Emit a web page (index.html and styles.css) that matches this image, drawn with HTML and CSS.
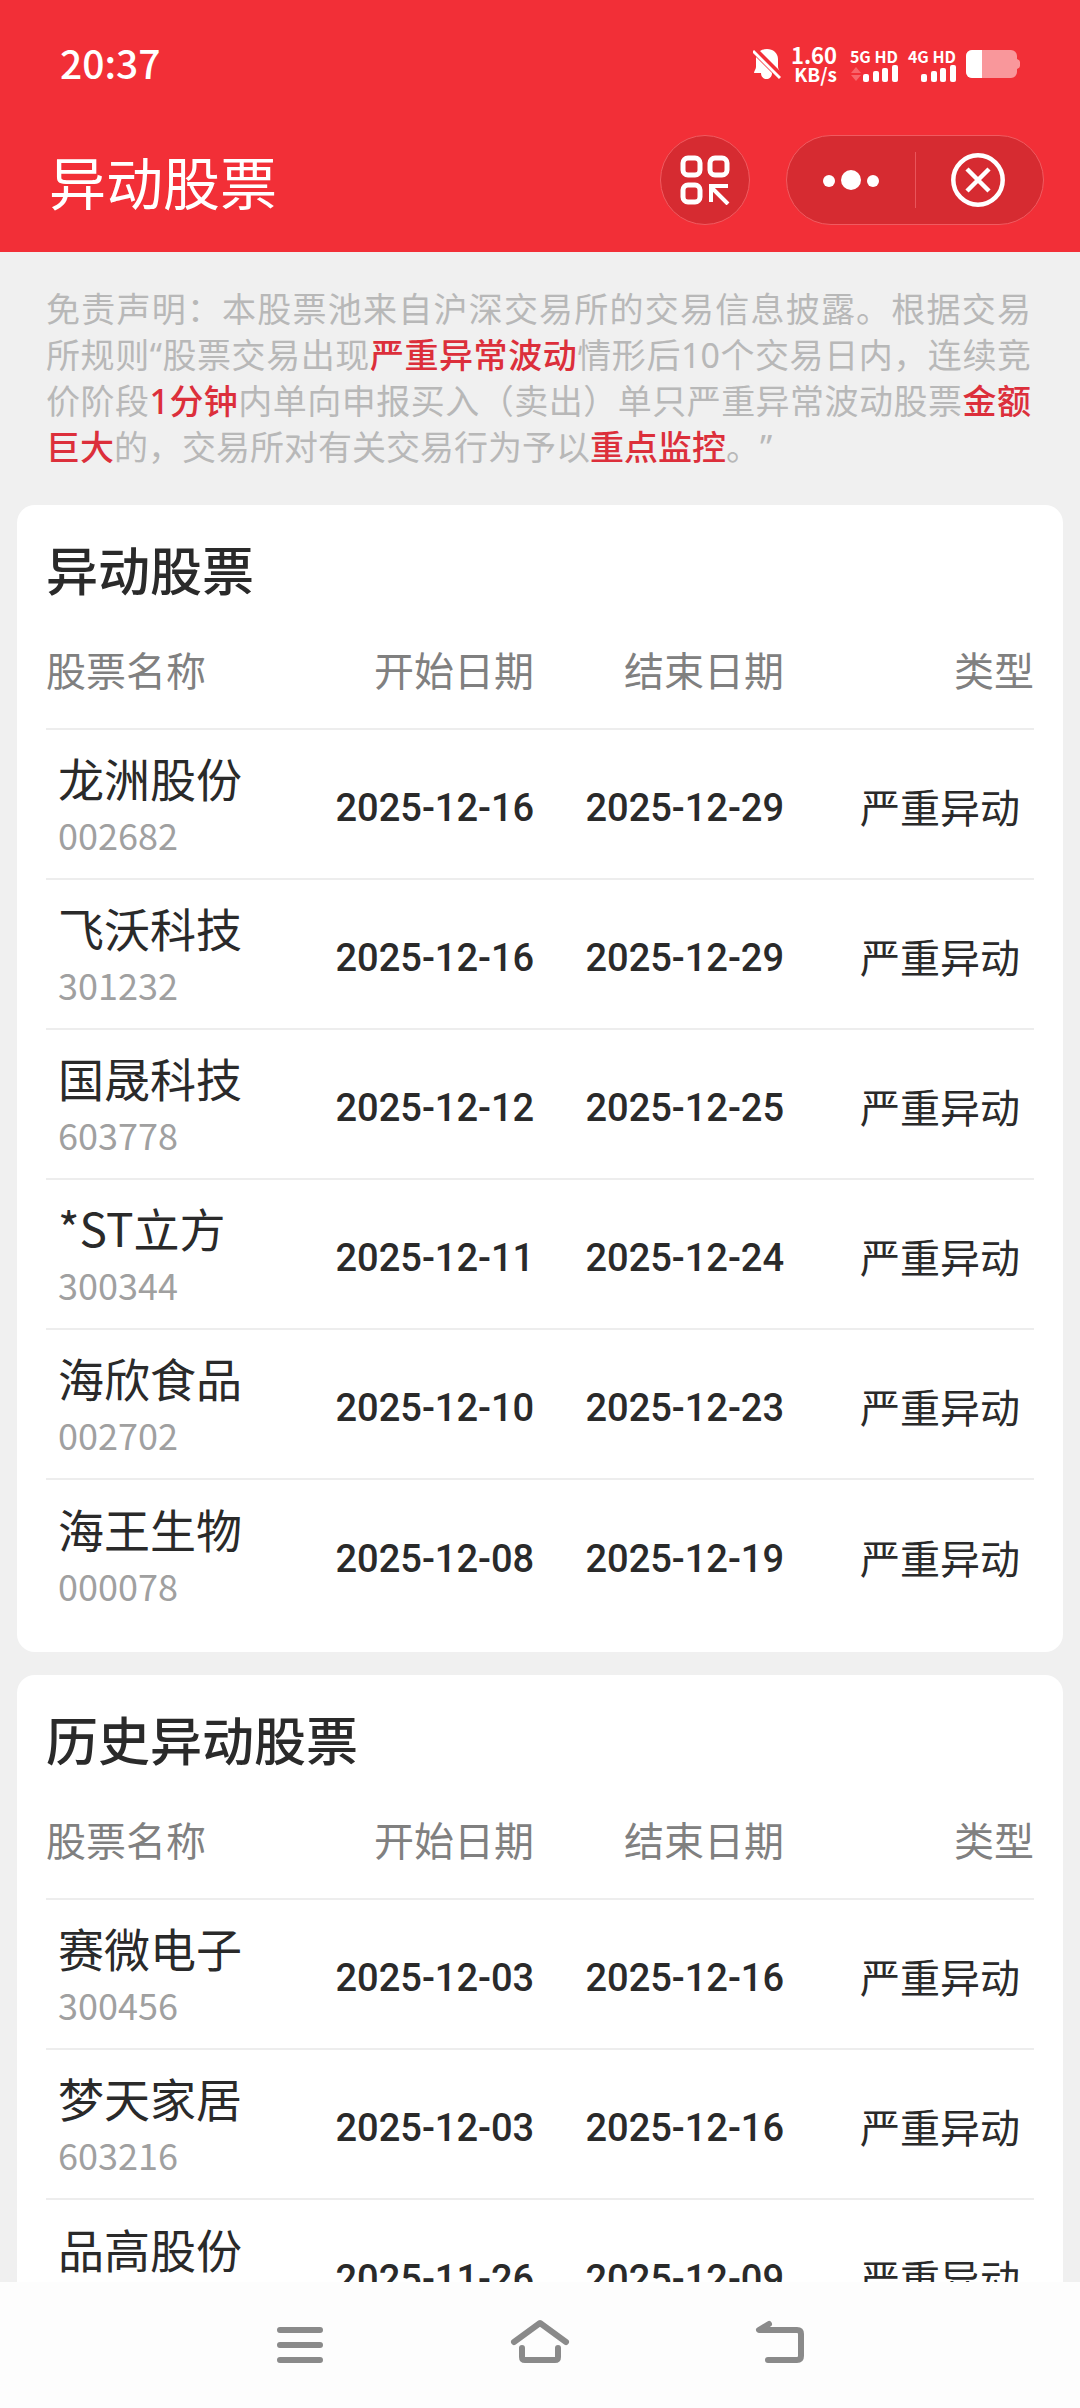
FILE: index.html
```html
<!DOCTYPE html>
<html lang="zh-CN">
<head>
<meta charset="utf-8">
<meta name="viewport" content="width=device-width">
<title>异动股票</title>
<link rel="stylesheet" href="styles.css">
</head>
<body>
<header class="top">
  <div class="status">
    <span class="clock">20:37</span>
    <div class="indicators">
      <svg class="bell" width="28" height="34" viewBox="0 0 28 34" aria-hidden="true">
        <path fill="#fff" d="M14 2C8 2 3 6 3 12v8c0 2-2 4-2 6h26c0-2-2-4-2-6v-8C25 6 20 2 14 2zM8 26h11c0 8-11 8-11 0z"/>
        <path stroke="#f22f37" stroke-width="7" d="M-2 0 30 32"/>
        <path stroke="#fff" stroke-width="3" d="M0 4 27 31"/>
      </svg>
      <div class="speed"><span class="speed-value">1.60</span><span class="speed-unit">KB/s</span></div>
      <div class="signal">
        <span>5G HD</span>
        <svg width="48" height="17" viewBox="0 0 48 17" fill="#fff" aria-hidden="true">
          <path fill="#f8656b" d="M1 8 6 2l5 6zM1 10l5 6 5-6z"/>
          <rect x="13" y="9" width="6" height="8" rx="2"/><rect x="23" y="6" width="6" height="11" rx="2"/><rect x="32" y="3" width="6" height="14" rx="2"/><rect x="42" y="0" width="6" height="17" rx="2"/>
        </svg>
      </div>
      <div class="signal">
        <span>4G HD</span>
        <svg width="48" height="17" viewBox="0 0 48 17" fill="#fff" aria-hidden="true">
          <rect x="13" y="9" width="6" height="8" rx="2"/><rect x="23" y="6" width="6" height="11" rx="2"/><rect x="32" y="3" width="6" height="14" rx="2"/><rect x="42" y="0" width="6" height="17" rx="2"/>
        </svg>
      </div>
      <svg class="battery" width="54" height="28" viewBox="0 0 54 28" aria-hidden="true">
        <path fill="#f9979b" d="M6 0h39a6 6 0 0 1 6 6v3q3 1 3 3v4q0 2-3 3v3a6 6 0 0 1-6 6H6a6 6 0 0 1-6-6V6a6 6 0 0 1 6-6z"/>
        <path fill="#fff" d="M16 0H6a6 6 0 0 0-6 6v16a6 6 0 0 0 6 6h10z"/>
      </svg>
    </div>
  </div>
  <div class="titlebar">
    <h1>异动股票</h1>
    <button class="round" aria-label="小程序">
      <svg width="50" height="50" viewBox="0 0 50 50" fill="none" stroke="#fff" stroke-width="5" aria-hidden="true">
        <rect x="3" y="3" width="17" height="17" rx="5"/><rect x="30" y="3" width="17" height="17" rx="5"/><rect x="3" y="30" width="17" height="17" rx="5"/>
        <path stroke-width="4" d="M31 47V31h17M31 32l17 17"/>
      </svg>
    </button>
    <div class="capsule">
      <button aria-label="更多">
        <svg width="58" height="22" viewBox="0 0 58 22" fill="#fff" aria-hidden="true"><circle cx="7" cy="12" r="6"/><circle cx="29" cy="11" r="10"/><circle cx="51" cy="12" r="6"/></svg>
      </button>
      <button aria-label="关闭">
        <svg width="56" height="56" viewBox="0 0 56 56" fill="none" stroke="#fff" stroke-width="4.5" aria-hidden="true"><circle cx="27" cy="28" r="24.7"/><path d="M16 17 38 39M38 17 16 39"/></svg>
      </button>
    </div>
  </div>
</header>

<main class="content">
  <p class="notice">免责声明：本股票池来自沪深交易所的交易信息披露。根据交易所规则“股票交易出现<em>严重异常波动</em>情形后10个交易日内，连续竞价阶段<em>1分钟</em>内单向申报买入（卖出）单只严重异常波动股票<em>金额巨大</em>的，交易所对有关交易行为予以<em>重点监控</em>。”</p>

  <section class="card">
    <h2>异动股票</h2>
    <table>
      <thead><tr><th>股票名称</th><th>开始日期</th><th>结束日期</th><th>类型</th></tr></thead>
      <tbody>
        <tr><td><b>龙洲股份</b><small>002682</small></td><td>2025-12-16</td><td>2025-12-29</td><td>严重异动</td></tr>
        <tr><td><b>飞沃科技</b><small>301232</small></td><td>2025-12-16</td><td>2025-12-29</td><td>严重异动</td></tr>
        <tr><td><b>国晟科技</b><small>603778</small></td><td>2025-12-12</td><td>2025-12-25</td><td>严重异动</td></tr>
        <tr><td><b>*ST立方</b><small>300344</small></td><td>2025-12-11</td><td>2025-12-24</td><td>严重异动</td></tr>
        <tr><td><b>海欣食品</b><small>002702</small></td><td>2025-12-10</td><td>2025-12-23</td><td>严重异动</td></tr>
        <tr><td><b>海王生物</b><small>000078</small></td><td>2025-12-08</td><td>2025-12-19</td><td>严重异动</td></tr>
      </tbody>
    </table>
  </section>

  <section class="card">
    <h2>历史异动股票</h2>
    <table>
      <thead><tr><th>股票名称</th><th>开始日期</th><th>结束日期</th><th>类型</th></tr></thead>
      <tbody>
        <tr><td><b>赛微电子</b><small>300456</small></td><td>2025-12-03</td><td>2025-12-16</td><td>严重异动</td></tr>
        <tr><td><b>梦天家居</b><small>603216</small></td><td>2025-12-03</td><td>2025-12-16</td><td>严重异动</td></tr>
        <tr><td><b>品高股份</b><small>688227</small></td><td>2025-11-26</td><td>2025-12-09</td><td>严重异动</td></tr>
      </tbody>
    </table>
  </section>
</main>

<nav class="sysnav" aria-label="系统导航">
  <button aria-label="最近任务">
    <svg width="60" height="60" viewBox="0 0 60 60" fill="none" stroke="#8a8a8a" stroke-width="6" stroke-linecap="round" aria-hidden="true"><path d="M10 15h40M10 30h40M10 45h40"/></svg>
  </button>
  <button aria-label="主屏幕">
    <svg width="60" height="60" viewBox="0 0 60 60" fill="none" stroke="#8a8a8a" stroke-width="6" stroke-linecap="round" stroke-linejoin="round" aria-hidden="true"><path d="M4 27 30 8l26 19M12 33v9q0 3 3 3h30q3 0 3-3v-9"/></svg>
  </button>
  <button aria-label="返回">
    <svg width="60" height="60" viewBox="0 0 60 60" fill="none" stroke="#8a8a8a" stroke-width="6" stroke-linecap="round" stroke-linejoin="round" aria-hidden="true"><path d="M19 9 9 15h38q4 0 4 4v22q0 4-4 4H18"/></svg>
  </button>
</nav>
</body>
</html>
```
FILE: styles.css
```css
* { box-sizing: border-box; }

body {
  margin: 0;
  height: 100vh;
  display: flex;
  flex-direction: column;
  overflow: hidden;
  background: #f0f0f0;
  color: #2a2a2a;
  font-family: "Noto Sans CJK SC", sans-serif;
}

button {
  margin: 0;
  padding: 0;
  border: 0;
  background: none;
  font: inherit;
  cursor: pointer;
}

svg { display: block; flex: none; }

/* header */
.top {
  flex: none;
  background: #f22f37;
  color: #fff;
  padding-bottom: 27px;
}

.status {
  display: flex;
  justify-content: space-between;
  align-items: center;
  height: 108px;
  padding: 20px 60px 0;
}

.clock { font-size: 39px; line-height: 56px; font-weight: 500; padding-bottom: 4px; }

.indicators { display: flex; align-items: center; gap: 10px; font-weight: 700; }

.speed, .signal { display: flex; flex-direction: column; align-items: flex-end; }
.speed { margin-right: 3px; font-size: 19px; line-height: 19px; }
.speed-value { font-size: 22px; }
.signal { width: 48px; font-size: 16px; line-height: 18px; white-space: nowrap; }

.titlebar {
  display: flex;
  align-items: center;
  margin-top: 27px;
  padding: 0 36px 0 49px;
}

h1 { margin: 0 auto 0 0; font-size: 57px; line-height: 88px; font-weight: 400; }

.round, .capsule {
  height: 90px;
  border: 1px solid #f05b60;
  border-radius: 45px;
  background: #d62b31;
}

.round {
  display: flex;
  align-items: center;
  justify-content: center;
  width: 90px;
  margin-right: 36px;
}

.capsule { display: flex; align-items: center; width: 258px; }

.capsule button {
  flex: 1;
  display: flex;
  align-items: center;
  justify-content: center;
  height: 56px;
}

.capsule button + button { border-left: 1px solid #e9555b; }

/* page content */
.content { flex: 1; min-height: 0; overflow: hidden; }

.notice {
  margin: 0;
  padding: 34px 49px 35px 46px;
  font-family: "Noto Sans", "Noto Sans CJK SC", sans-serif;
  font-size: 34px;
  line-height: 46px;
  font-weight: 400;
  text-align: justify;
  text-spacing-trim: space-all;
  color: #b8b8b8;
}

.notice em { font-style: normal; font-weight: 500; color: #dc2f3b; }

.card {
  margin: 0 17px 23px;
  padding: 29px 29px 23px;
  border-radius: 18px;
  background: #fff;
}

h2 { margin: 0 0 3px; font-size: 52px; line-height: 70px; font-weight: 500; }

table { width: 100%; table-layout: fixed; border-collapse: collapse; }

th {
  width: 25.3%;
  height: 122px;
  padding: 2px 0 0;
  font-size: 40px;
  line-height: 50px;
  font-weight: 400;
  text-align: right;
  color: #808080;
}

th:first-child { width: auto; text-align: left; }

td {
  height: 150px;
  padding: 8px 0 0;
  border-top: 2px solid #ededed;
  font-family: Roboto, sans-serif;
  font-size: 38px;
  line-height: 50px;
  font-weight: 500;
  text-align: right;
  white-space: nowrap;
}

td:first-child {
  padding: 0 0 2px 12px;
  font-family: "Noto Sans CJK SC", sans-serif;
  text-align: left;
}

td:last-child {
  padding: 4px 14px 0 0;
  font-family: "Noto Sans CJK SC", sans-serif;
  font-size: 40px;
  font-weight: 400;
}

td b { display: block; font-size: 46px; line-height: 62px; font-weight: 400; }
td small { display: block; font-size: 36px; line-height: 52px; font-weight: 400; color: #a0a0a0; }

/* system navigation */
.sysnav {
  flex: none;
  display: flex;
  justify-content: space-evenly;
  align-items: center;
  height: 126px;
  padding: 0 90px;
  background: #fdfdfd;
}
```
